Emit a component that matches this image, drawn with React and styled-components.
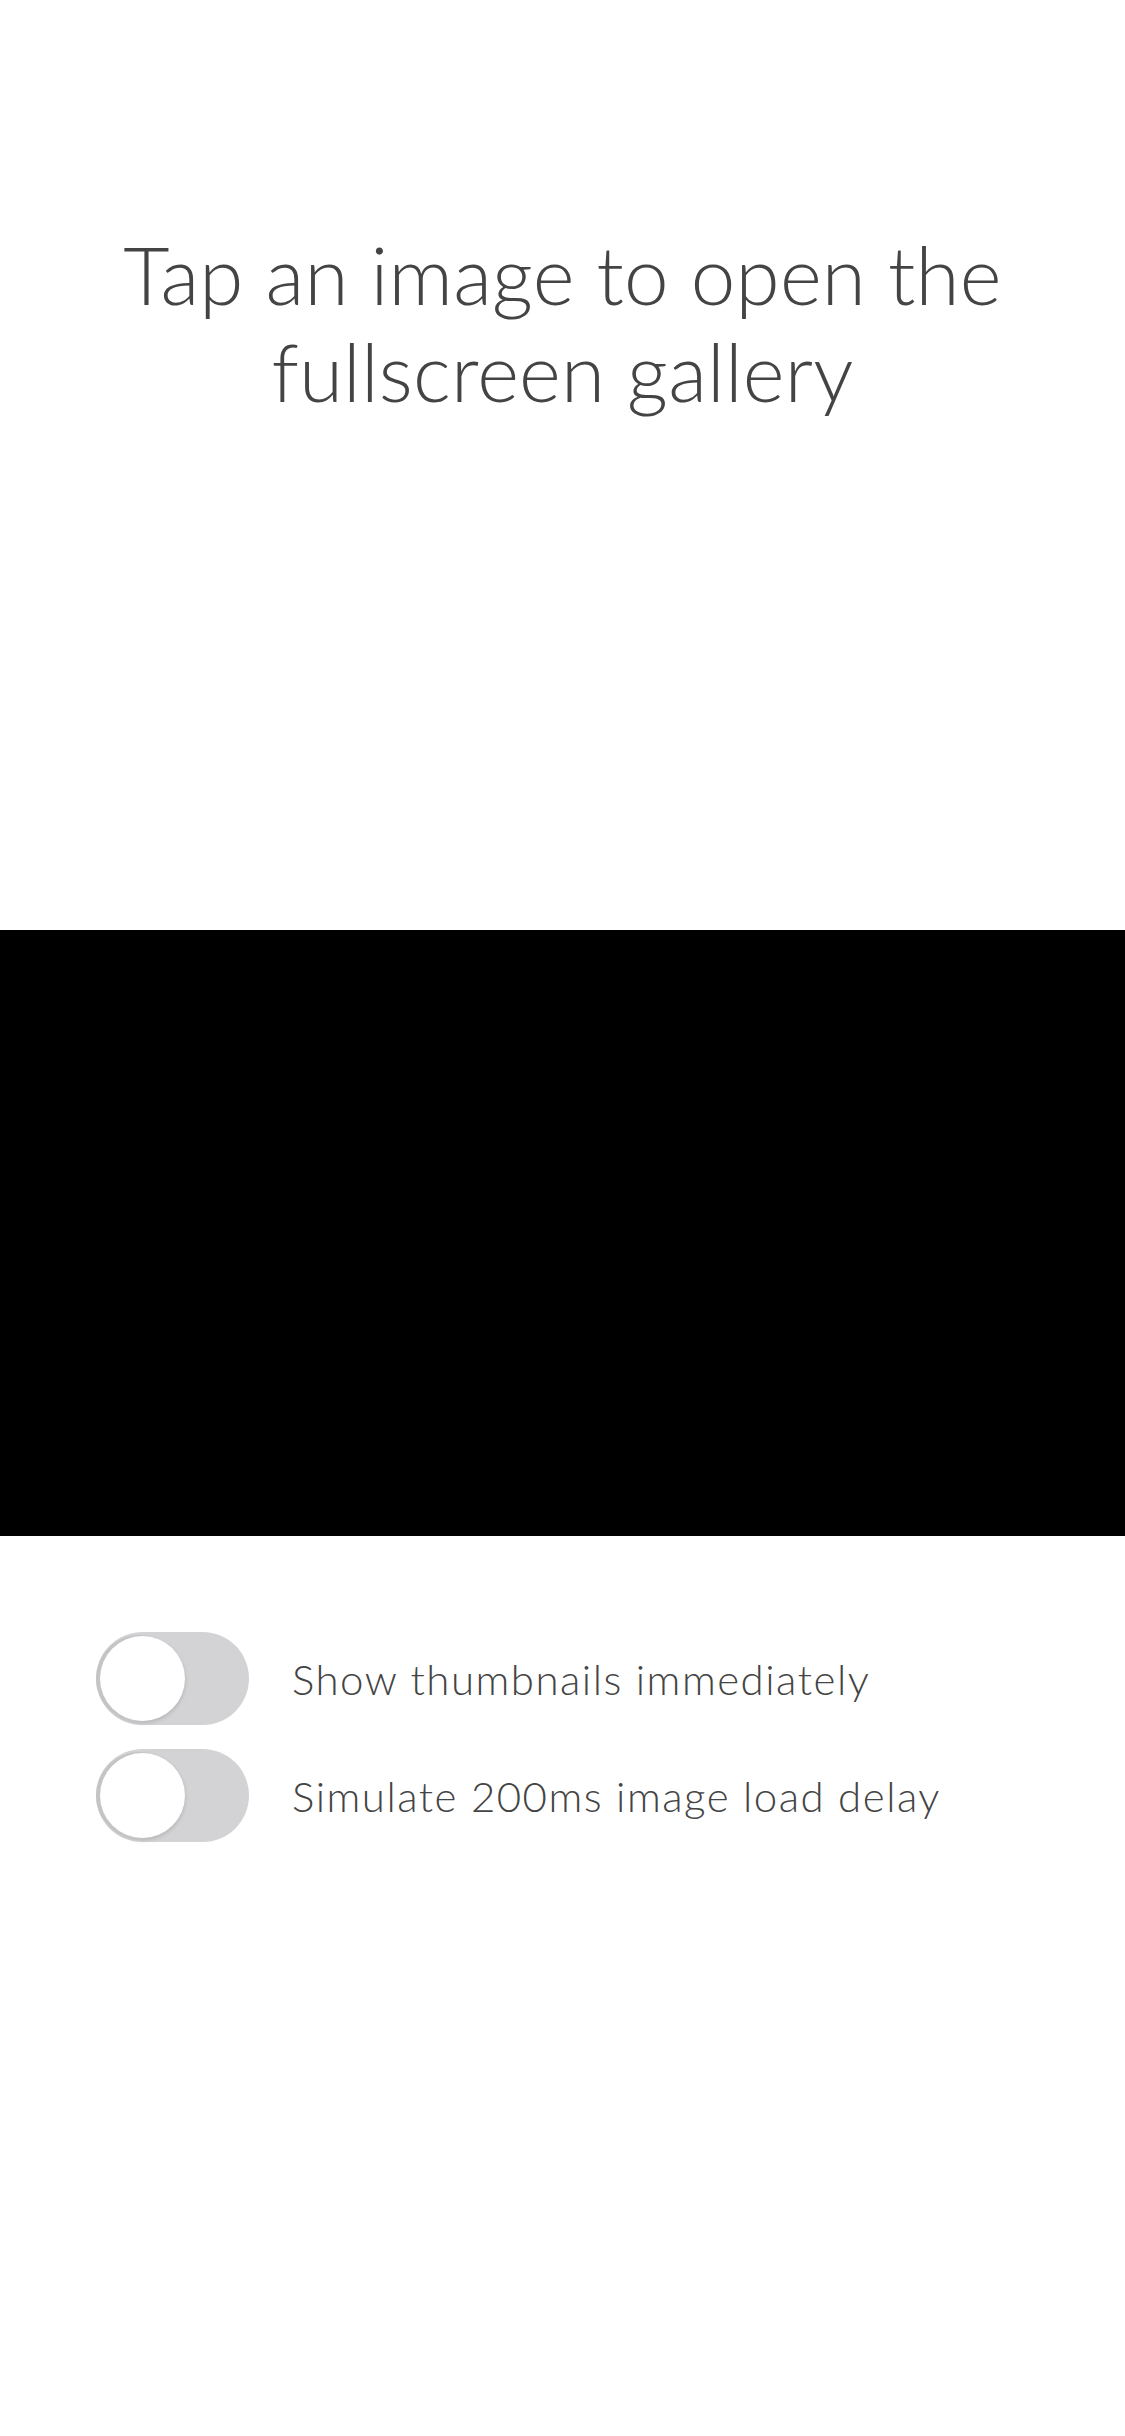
import React, { useState } from 'react';
import styled, { createGlobalStyle } from 'styled-components';

const Global = createGlobalStyle`
html, body {
  margin: 0;
  padding: 0;
  background: #fff;
}
`

const Page = styled.div`
width: 1125px;
min-height: 2436px;
display: flex;
flex-direction: column;
font-family: Lato, 'Open Sans', sans-serif;
color: #444444;
`

const Title = styled.h1`
margin: 0;
padding-top: 226px;
height: 930px;
box-sizing: border-box;
text-align: center;
font-weight: 300;
font-size: 80px;
line-height: 97px;
letter-spacing: 0.2px;
`

const Gallery = styled.div`
height: 606px;
background: #000;
`

const Options = styled.div`
display: flex;
flex-direction: column;
gap: 24px;
padding: 96px 0 0 96px;
`

const Row = styled.label`
display: flex;
align-items: center;
gap: 43px;
font-size: 42px;
font-weight: 300;
letter-spacing: 1.5px;
cursor: pointer;
`

const Track = styled.span`
position: relative;
width: 153px;
height: 93px;
border-radius: 47px;
background: ${p => (p.on ? '#4cd964' : '#d3d3d6')};
flex-shrink: 0;
`

const Thumb = styled.span`
position: absolute;
top: 4px;
left: ${p => (p.on ? '66px' : '4px')};
width: 85px;
height: 85px;
border-radius: 50%;
background: #fff;
box-shadow: -3px 0 0 1px #c4c4c6, 0 2px 4px rgba(0, 0, 0, 0.15);
`

const Toggle = ({ label, on, onChange }) => (
    <Row onClick={onChange}>
        <Track on={on}>
            <Thumb on={on} />
        </Track>
        {label}
    </Row>
)

export default function App() {
    const [thumbs, setThumbs] = useState(false)
    const [delay, setDelay] = useState(false)
    return (
        <Page>
            <Global />
            <Title>Tap an image to open the<br />fullscreen gallery</Title>
            <Gallery />
            <Options>
                <Toggle label="Show thumbnails immediately" on={thumbs} onChange={() => setThumbs(!thumbs)} />
                <Toggle label="Simulate 200ms image load delay" on={delay} onChange={() => setDelay(!delay)} />
            </Options>
        </Page>
    )
}
